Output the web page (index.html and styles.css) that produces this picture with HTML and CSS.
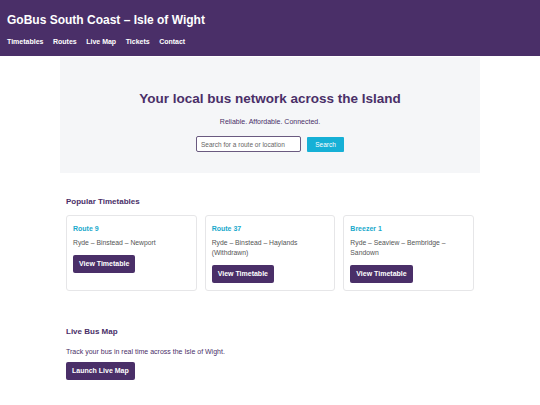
FILE: index.html
```html
<!DOCTYPE html>
<html lang="en">
<head>
<meta charset="utf-8">
<title>GoBus South Coast – Isle of Wight</title>
<link rel="stylesheet" href="styles.css">
</head>
<body>
<header class="site-header">
  <h1 class="brand">GoBus South Coast – Isle of Wight</h1>
  <nav class="nav">
    <a href="#">Timetables</a>
    <a href="#">Routes</a>
    <a href="#">Live Map</a>
    <a href="#">Tickets</a>
    <a href="#">Contact</a>
  </nav>
</header>
<main class="container">
  <section class="hero">
    <h2 class="hero-title">Your local bus network across the Island</h2>
    <p class="hero-sub">Reliable. Affordable. Connected.</p>
    <form class="search">
      <input class="search-input" type="text" placeholder="Search for a route or location">
      <button class="search-btn" type="button">Search</button>
    </form>
  </section>
  <section class="section">
    <h3 class="section-title">Popular Timetables</h3>
    <div class="cards">
      <div class="card">
        <div class="card-title">Route 9</div>
        <p class="card-text">Ryde – Binstead – Newport</p>
        <a class="btn" href="#">View Timetable</a>
      </div>
      <div class="card">
        <div class="card-title">Route 37</div>
        <p class="card-text">Ryde – Binstead – Haylands (Withdrawn)</p>
        <a class="btn" href="#">View Timetable</a>
      </div>
      <div class="card">
        <div class="card-title">Breezer 1</div>
        <p class="card-text">Ryde – Seaview – Bembridge – Sandown</p>
        <a class="btn" href="#">View Timetable</a>
      </div>
    </div>
  </section>
  <section class="section live">
    <h3 class="section-title">Live Bus Map</h3>
    <p class="live-text">Track your bus in real time across the Isle of Wight.</p>
    <a class="btn" href="#">Launch Live Map</a>
  </section>
</main>
</body>
</html>
```
FILE: styles.css
```css
* { box-sizing: border-box; }
body {
  margin: 0;
  font-family: "Liberation Sans", Arial, sans-serif;
  color: #4a2f68;
  background: #fff;
}
.site-header {
  background: #4a2f68;
  color: #fff;
  padding: 13px 7px 10px;
}
.brand {
  margin: 0;
  font-size: 12px;
  line-height: 15px;
  font-weight: bold;
}
.nav {
  display: flex;
  gap: 9.5px;
  margin-top: 9px;
}
.nav a {
  color: #fff;
  text-decoration: none;
  font-size: 7px;
  font-weight: bold;
  line-height: 9px;
}
.container {
  width: 420px;
  margin: 1px auto 0;
}
.hero {
  background: #f5f6f8;
  padding: 33px 10px 21px;
  text-align: center;
}
.hero-title {
  margin: 0;
  font-size: 13.5px;
  line-height: 17px;
  font-weight: bold;
}
.hero-sub {
  margin: 10px 0 0;
  font-size: 7px;
  line-height: 9px;
}
.search {
  display: flex;
  justify-content: center;
  align-items: center;
  gap: 6px;
  margin-top: 10px;
}
.search-input {
  width: 105px;
  height: 16px;
  border: 1px solid #6a5a80;
  border-radius: 2px;
  padding: 0 4px;
  font-family: inherit;
  font-size: 6.5px;
  background: #fff;
}
.search-input::placeholder { color: #666; }
.search-btn {
  width: 37px;
  height: 15px;
  border: none;
  border-radius: 1px;
  background: #16b0d6;
  color: #fff;
  font-family: inherit;
  font-size: 6.5px;
  padding: 0;
}
.section {
  padding: 24px 6px 0;
}
.section-title {
  margin: 0;
  font-size: 8px;
  line-height: 10px;
  font-weight: bold;
}
.cards {
  display: grid;
  grid-template-columns: repeat(3, 1fr);
  gap: 8px;
  margin-top: 8px;
}
.card {
  display: flex;
  flex-direction: column;
  align-items: flex-start;
  border: 1px solid #e6e6e8;
  border-radius: 3px;
  padding: 8px 6px 7px;
}
.card-title {
  color: #1aa9cc;
  font-size: 7px;
  line-height: 9px;
  font-weight: bold;
}
.card-text {
  margin: 5px 0 7px;
  color: #555;
  font-size: 6.8px;
  line-height: 10px;
}
.btn {
  display: block;
  width: fit-content;
  background: #4a2f68;
  color: #fff;
  text-decoration: none;
  font-size: 7px;
  font-weight: bold;
  line-height: 18px;
  padding: 0 6px;
  border-radius: 2px;
}
.live {
  padding-top: 36px;
}
.live-text {
  margin: 10px 0 6px;
  font-size: 7px;
  line-height: 9px;
}
```
